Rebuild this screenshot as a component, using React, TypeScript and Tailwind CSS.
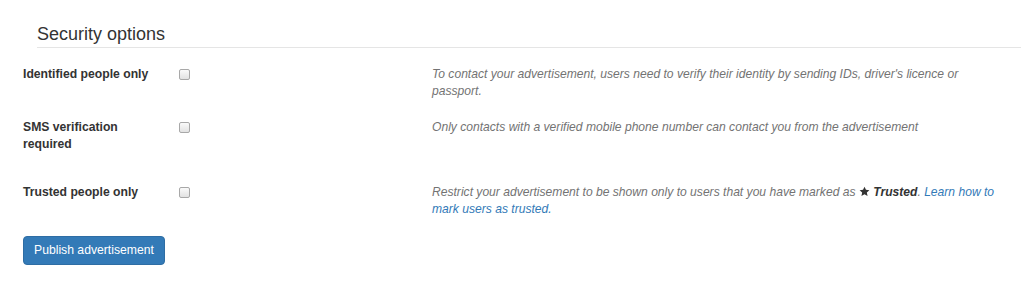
export default function App() {
    const rows = [
        {
            label: "Identified people only",
            gap: "mt-[18px]",
            desc: <>To contact your advertisement, users need to verify their identity by sending IDs, driver's licence or passport.</>,
        },
        {
            label: "SMS verification required",
            gap: "mt-[19px]",
            desc: <>Only contacts with a verified mobile phone number can contact you from the advertisement</>,
        },
        {
            label: "Trusted people only",
            gap: "mt-[31px]",
            desc: (
                <>
                    Restrict your advertisement to be shown only to users that you have marked as{" "}
                    <svg className="inline-block w-[11px] h-[11px] align-[-1px] text-[#333]" viewBox="0 0 24 24" fill="currentColor">
                        <path d="M12 1.5l3.2 6.9 7.5.8-5.6 5.1 1.6 7.4L12 17.9l-6.7 3.8 1.6-7.4L1.3 9.2l7.5-.8z" />
                    </svg>{" "}
                    <b className="text-[#333]">Trusted</b>.{" "}
                    <a href="#" className="text-[#337ab7]">Learn how to mark users as trusted.</a>
                </>
            ),
        },
    ];

    return (
        <div className="w-[1024px] h-[293px] bg-white font-['Liberation_Sans',Arial,sans-serif] text-[12.2px] leading-[17px] text-[#333]">
            <div className="ml-[37px] mr-[3px] pt-[22px] pb-[1px] border-b border-[#e5e5e5] text-[18px] leading-[24px] text-[#333]">
                Security options
            </div>
            <div className="pl-[23px]">
                {rows.map((r) => (
                    <div key={r.label} className={`flex items-start ${r.gap}`}>
                        <div className="w-[156px] pr-[20px] font-bold">{r.label}</div>
                        <div className="w-[253px] flex pt-[3px]">
                            <input
                                type="checkbox"
                                className="appearance-none w-[11px] h-[11px] m-0 rounded-[2px] border border-[#a8a8a8] bg-gradient-to-b from-[#fafafa] to-[#e2e2e2]"
                            />
                        </div>
                        <div className="w-[572px] italic text-[#737373] text-[12.1px]">{r.desc}</div>
                    </div>
                ))}
                <button className="mt-[18px] h-[29px] px-[10px] bg-[#337ab7] border border-[#2e6da4] rounded-[4px] text-white text-[12.2px]">
                    Publish advertisement
                </button>
            </div>
        </div>
    );
}
